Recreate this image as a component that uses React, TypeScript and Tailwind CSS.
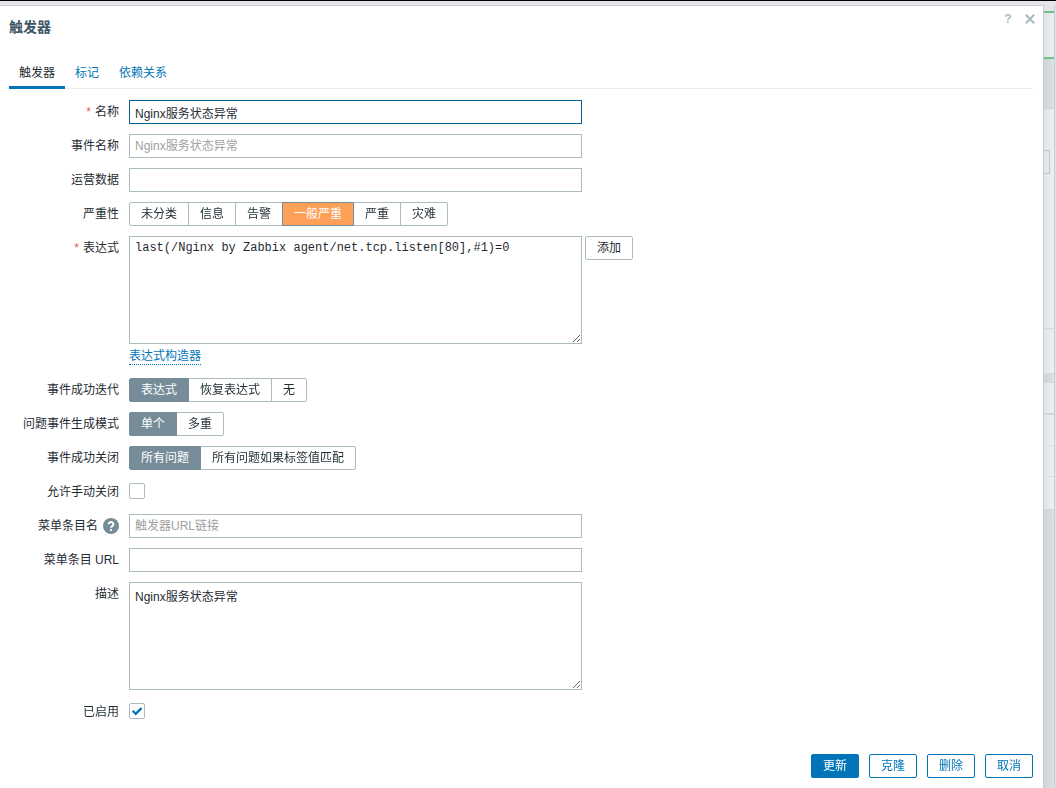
import { useState } from "react"
import type { ReactNode } from "react"
import clsx from "clsx"

const INPUT =
  "block h-6 w-full max-w-[453px] border border-[#acbbc2] px-[5px] text-[#1f2c33] outline-none placeholder:text-[#a0a0a0] focus:border-[#0a5f93]"

const TEXTAREA =
  "block h-[108px] w-full max-w-[453px] resize border border-[#acbbc2] px-[5px] text-[#1f2c33] outline-none"

function Row({
  label,
  htmlFor,
  required,
  help,
  children,
}: {
  label: string
  htmlFor?: string
  required?: boolean
  help?: boolean
  children: ReactNode
}) {
  return (
    <div className="grid grid-cols-[110px_minmax(0,1fr)] gap-x-[10px]">
      <div className="flex h-6 items-center justify-end whitespace-nowrap">
        {required && <span className="mr-1 text-[#e45959]">*</span>}
        {htmlFor ? <label htmlFor={htmlFor}>{label}</label> : <span>{label}</span>}
        {help && (
          <button type="button" aria-label="帮助" className="ml-[5px] size-4">
            <svg viewBox="0 0 16 16" className="size-4">
              <circle cx="8" cy="8" r="8" fill="#768d99" />
              <path
                d="M5.6 6.3a2.4 2.2 0 1 1 3.7 1.8C8.4 8.7 8 9 8 9.8"
                fill="none"
                stroke="#fff"
                strokeWidth="1.9"
              />
              <rect x="7" y="10.9" width="2" height="2" fill="#fff" />
            </svg>
          </button>
        )}
      </div>
      <div className="min-w-0">{children}</div>
    </div>
  )
}

function Segmented({
  name,
  options,
  initial,
  warning,
}: {
  name: string
  options: string[]
  initial: number
  warning?: boolean
}) {
  const [selected, setSelected] = useState(initial)

  return (
    <div role="radiogroup" aria-label={name} className="flex">
      {options.map((option, i) => (
        <label
          key={option}
          className={clsx(
            "relative -ml-px flex h-6 cursor-pointer items-center whitespace-nowrap border px-[11px] first:ml-0 first:rounded-l-xs last:rounded-r-xs",
            i !== selected && "border-[#acbbc2] bg-white",
            i === selected && "z-10 border-[#768d99] text-white",
            i === selected && (warning ? "bg-[#ffa059]" : "bg-[#768d99]")
          )}
        >
          <input
            type="radio"
            name={name}
            checked={i === selected}
            onChange={() => setSelected(i)}
            className="sr-only"
          />
          {option}
        </label>
      ))}
    </div>
  )
}

function Checkbox({ id, initial = false }: { id: string; initial?: boolean }) {
  const [checked, setChecked] = useState(initial)

  return (
    <div className="flex h-[22px] items-center">
      <div className="relative size-4">
        <input
          id={id}
          type="checkbox"
          checked={checked}
          onChange={(e) => setChecked(e.target.checked)}
          className="block size-4 appearance-none rounded-xs border border-[#acbbc2] bg-white"
        />
        {checked && (
          <svg viewBox="0 0 16 16" className="pointer-events-none absolute inset-0 size-4">
            <path d="M3.7 7.8l3 3 5.8-5.6" fill="none" stroke="#0275b8" strokeWidth="2.3" />
          </svg>
        )}
      </div>
    </div>
  )
}

function FooterButton({ children, primary }: { children: ReactNode; primary?: boolean }) {
  return (
    <button
      type="button"
      className={clsx(
        "h-6 rounded-xs border border-[#0275b8] px-[11px]",
        primary ? "bg-[#0275b8] text-white" : "bg-white text-[#0275b8]"
      )}
    >
      {children}
    </button>
  )
}

// Sliver of the dimmed page that stays visible beside the dialog
function PageEdge() {
  return (
    <div className="flex w-3 shrink-0 flex-col bg-linear-to-r from-[#cdd4d7] to-[#dde3e6] pr-px">
      <div className="flex grow flex-col border-r border-[#c5d0d6]">
        <div className="h-[6px] bg-[#e4e5ea]" />
        <div className="h-12 border-y-2 border-[#71c088] bg-linear-to-r from-[#dfe4e7] to-[#ebf0f3]" />
        <div className="h-[49px]" />
        <div className="flex h-[220px] flex-col border-t border-[#cfd6d9] bg-linear-to-r from-[#dfe4e7] to-[#ebf0f3] pt-[41px]">
          <div className="h-6 w-[6px] border border-l-0 border-[#bcc5c9]" />
        </div>
        <div className="h-[46px] border-y border-[#d3d9dc] bg-linear-to-r from-[#dfe4e7] to-[#ebf0f3]" />
        <div className="h-2" />
        <div className="h-[33px] border-t border-b-2 border-[#d0d7da] bg-linear-to-r from-[#dfe4e7] to-[#ebf0f3]" />
        <div className="h-[31px] border-b border-[#d8dee1] bg-linear-to-r from-[#dfe4e7] to-[#ebf0f3]" />
        <div className="h-[31px] border-b border-[#d8dee1] bg-linear-to-r from-[#dfe4e7] to-[#ebf0f3]" />
        <div className="h-[33px] border-b border-[#cfd6d9] bg-linear-to-r from-[#dfe4e7] to-[#ebf0f3]" />
      </div>
    </div>
  )
}

const TABS = ["触发器", "标记", "依赖关系"]

export default function App() {
  const [tab, setTab] = useState(0)

  return (
    <div className="flex min-h-screen flex-col border-t border-black bg-[#e7e4e9] pt-1 font-['Liberation_Sans','Noto_Sans_CJK_SC',sans-serif] text-xs leading-4 text-[#1f2c33]">
      <div className="flex grow">
        <main className="min-w-0 flex-1 border-t border-r border-[#c5d0d6] bg-white pr-[10px] pb-[10px] pl-[9px]">
          <header className="flex h-[51px] items-start justify-between">
            <h1 className="pt-[11px] text-sm leading-5 font-bold text-[#3c5563]">触发器</h1>
            <div className="-mr-[5px] flex gap-[6px] pt-[5px] text-[#acbbc2]">
              <button type="button" aria-label="帮助" className="flex size-4 items-center justify-center font-bold">
                ?
              </button>
              <button type="button" aria-label="关闭" className="flex size-4 items-center justify-center">
                <svg viewBox="0 0 10 10" className="size-[10px]">
                  <path d="M.8.8l8.4 8.4M9.2.8L.8 9.2" stroke="currentColor" strokeWidth="2.2" />
                </svg>
              </button>
            </div>
          </header>

          <div role="tablist" className="flex h-8 border-b border-[#ebeef0]">
            {TABS.map((name, i) => (
              <button
                key={name}
                type="button"
                role="tab"
                aria-selected={i === tab}
                onClick={() => setTab(i)}
                className={clsx(
                  "h-8 border-b-3 px-[10px] pt-[2px]",
                  i === tab ? "border-[#0275b8]" : "border-transparent text-[#0275b8]"
                )}
              >
                {name}
              </button>
            ))}
          </div>

          <form className="pt-[11px]" onSubmit={(e) => e.preventDefault()}>
            <div className="flex flex-col gap-[10px]">
              <Row label="名称" htmlFor="name" required>
                <input id="name" autoFocus defaultValue="Nginx服务状态异常" className={INPUT} />
              </Row>
              <Row label="事件名称" htmlFor="event-name">
                <input id="event-name" placeholder="Nginx服务状态异常" className={INPUT} />
              </Row>
              <Row label="运营数据" htmlFor="opdata">
                <input id="opdata" className={INPUT} />
              </Row>
              <Row label="严重性">
                <Segmented
                  name="严重性"
                  options={["未分类", "信息", "告警", "一般严重", "严重", "灾难"]}
                  initial={3}
                  warning
                />
              </Row>
              <Row label="表达式" htmlFor="expression" required>
                <div className="flex items-start gap-[3px]">
                  <textarea
                    id="expression"
                    spellCheck={false}
                    defaultValue="last(/Nginx by Zabbix agent/net.tcp.listen[80],#1)=0"
                    className={clsx(TEXTAREA, "pt-[3px] font-['Liberation_Mono',monospace]")}
                  />
                  <button type="button" className="h-6 shrink-0 rounded-xs border border-[#acbbc2] px-[11px]">
                    添加
                  </button>
                </div>
                <div className="flex h-6 items-center">
                  <a href="#constructor" className="border-b border-dotted border-[#0275b8] text-[#0275b8]">
                    表达式构造器
                  </a>
                </div>
              </Row>
              <Row label="事件成功迭代">
                <Segmented name="事件成功迭代" options={["表达式", "恢复表达式", "无"]} initial={0} />
              </Row>
              <Row label="问题事件生成模式">
                <Segmented name="问题事件生成模式" options={["单个", "多重"]} initial={0} />
              </Row>
              <Row label="事件成功关闭">
                <Segmented name="事件成功关闭" options={["所有问题", "所有问题如果标签值匹配"]} initial={0} />
              </Row>
              <Row label="允许手动关闭" htmlFor="manual-close">
                <Checkbox id="manual-close" />
              </Row>
              <Row label="菜单条目名" htmlFor="url-name" help>
                <input id="url-name" placeholder="触发器URL链接" className={INPUT} />
              </Row>
              <Row label="菜单条目 URL" htmlFor="url">
                <input id="url" className={INPUT} />
              </Row>
              <Row label="描述" htmlFor="description">
                <textarea
                  id="description"
                  defaultValue="Nginx服务状态异常"
                  className={clsx(TEXTAREA, "pt-[6px]")}
                />
              </Row>
              <Row label="已启用" htmlFor="enabled">
                <Checkbox id="enabled" initial />
              </Row>
            </div>

            <footer className="flex justify-end gap-[10px] pt-[30px]">
              <FooterButton primary>更新</FooterButton>
              <FooterButton>克隆</FooterButton>
              <FooterButton>删除</FooterButton>
              <FooterButton>取消</FooterButton>
            </footer>
          </form>
        </main>
        <PageEdge />
      </div>
    </div>
  )
}
